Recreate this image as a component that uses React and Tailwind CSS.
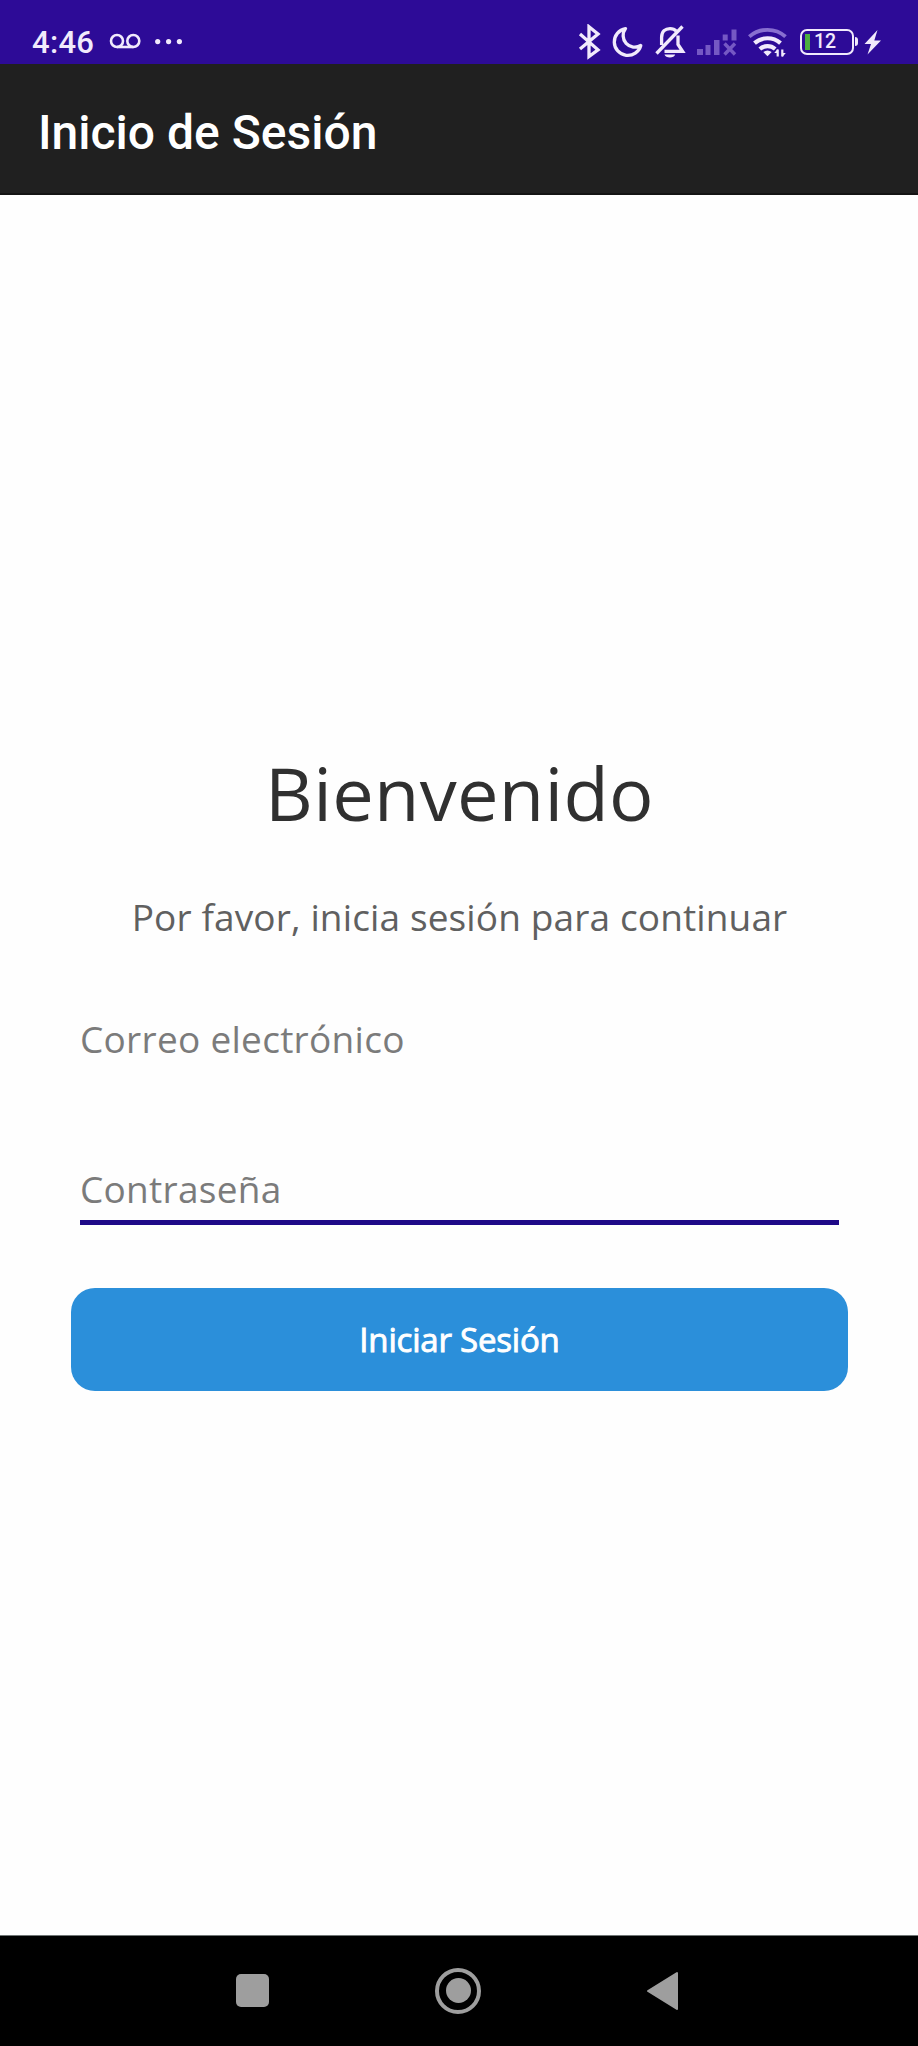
function StatusBar() {
  return (
    <header className="flex h-16 items-start bg-[#2d0b97] pt-6 pl-8 text-[#f1eafc]">
      <span className="mt-px h-9 w-[75px] font-[Roboto,sans-serif] text-[31px] leading-9 font-medium tracking-[0.3px] whitespace-nowrap">4:46</span>
      <svg className="h-9 w-9 shrink-0" viewBox="107 24 36 36" fill="none" stroke="currentColor" strokeWidth="2.6">
        <circle cx="117" cy="41" r="6" />
        <circle cx="133.3" cy="41" r="6" />
        <path d="M117 47h16.3" />
      </svg>
      <svg className="ml-2 h-9 w-9 shrink-0" viewBox="151 24 36 36" fill="currentColor">
        <circle cx="157.7" cy="41.6" r="2.6" />
        <circle cx="168.6" cy="41.6" r="2.6" />
        <circle cx="179.4" cy="41.6" r="2.6" />
      </svg>

      <div className="ml-auto flex h-9 w-[340px] shrink-0 items-start">
        <svg className="h-9 w-6 shrink-0" viewBox="578 24 24 36" fill="none" stroke="currentColor" strokeWidth="3.3">
          <path d="M580 34l18 15.8-9 6.7V26.8l9 7.2-18 15" />
        </svg>
        <svg className="ml-2 h-9 w-[34px] shrink-0" viewBox="610 24 34 36" fill="none" stroke="currentColor" strokeWidth="3.3" strokeLinejoin="round">
          <path d="M625.5 28.6A13.5 13.5 0 1 0 640.8 45.5A11.6 11.6 0 0 1 625.5 28.6Z" />
        </svg>
        <svg className="ml-2.5 h-9 w-[34px] shrink-0" viewBox="654 24 34 36" fill="none" stroke="currentColor" strokeWidth="3.3">
          <path d="M682.5 26.5L656.5 53.5" />
          <path d="M661.6 45V37.5C661.6 31.5 665.3 28.6 670 28.6C672.6 28.6 674.8 29.5 676.3 31.2" />
          <path d="M678 35.5V44.5L682.6 51.4H664.5" />
          <path d="M664.5 54.6h10.7c-.8 3.8-9.9 3.8-10.7 0z" fill="currentColor" stroke="none" />
        </svg>
        <svg className="ml-1.5 h-9 w-[46px] shrink-0 text-[#7558c4]" viewBox="694 24 46 36" fill="currentColor">
          <rect x="697" y="49" width="6" height="6" />
          <rect x="705.5" y="45" width="5" height="10" />
          <rect x="714" y="40" width="5.5" height="15" />
          <path d="M722.7 34.5h5v6h-5zM731.5 29.5h5v11h-5z" />
          <path d="M724.5 43.5l10.5 11M735 43.5l-10.5 11" stroke="currentColor" strokeWidth="3.4" />
        </svg>
        <svg className="ml-1.5 h-9 w-11 shrink-0" viewBox="746 24 44 36" fill="none" stroke="currentColor" strokeWidth="4.2">
          <path d="M749.3 36.7C759.5 27.5 775.5 27.5 785.5 36.7" stroke="#886fd0" strokeWidth="3.8" />
          <path d="M754.5 43.2C762 36.6 773 36.6 780.5 43.2" />
          <path d="M759.8 49C764.3 45.2 770.7 45.2 775.2 49" />
          <path d="M763.3 52q4.2-3 8.4 0l-4.2 4.3z" fill="currentColor" stroke="none" />
          <path d="M777.7 56.5v-7M782.3 49.5v7" strokeWidth="2.2" />
          <path d="M774.2 53l3.5-4v4zM785.8 53l-3.5 4v-4z" fill="currentColor" stroke="none" />
        </svg>
        <div className="mt-[5px] ml-2.5 flex h-[26px] w-[54px] shrink-0 items-center rounded-[7px] border-[2.4px] border-current pl-[3px]">
          <span className="h-4 w-[5px] shrink-0 bg-[#4caf3f]" />
          <span className="ml-1 font-[Roboto,sans-serif] text-[19.5px] leading-[22px] font-medium">12</span>
        </div>
        <span className="mt-[13px] ml-px h-[9px] w-[3px] shrink-0 rounded-r-sm bg-current" />
        <svg className="ml-[5px] h-9 w-5 shrink-0" viewBox="863 24 20 36" fill="currentColor">
          <path d="M877.5 30L864.5 44H871L867.5 54.5L881 40.5H874.3Z" />
        </svg>
      </div>
    </header>
  );
}

function NavigationBar() {
  return (
    <nav className="flex h-[111px] items-center border-t border-[#6f7575] bg-black pb-px pl-[236px] text-[#9e9e9e]">
      <span className="size-[33px] rounded-[5px] bg-current" />
      <span className="ml-[166px] flex size-[46px] items-center justify-center rounded-full border-4 border-current">
        <span className="size-[25px] rounded-full bg-current" />
      </span>
      <svg className="ml-[165px] h-10 w-[34px]" viewBox="0 0 34 40" fill="currentColor" stroke="currentColor" strokeWidth="2" strokeLinejoin="round">
        <path d="M2 20L31 2V38Z" />
      </svg>
    </nav>
  );
}

export default function App() {
  return (
    <div className="flex h-[2046px] w-[918px] flex-col overflow-hidden bg-[#fefefe] font-['Open_Sans',sans-serif]">
      <StatusBar />
      <div className="h-[131px] border-b-2 border-[#141414] bg-[#202020] pt-[39px] pl-[38px]">
        <h1 className="font-[Roboto,sans-serif] text-[48px] leading-[60px] font-medium whitespace-nowrap text-white">Inicio de Sesión</h1>
      </div>
      <main className="flex flex-1 flex-col pt-[548px] pr-[70px] pl-[71px]">
        <h2 className="text-center text-[74px] leading-[100px] tracking-[0.3px] whitespace-nowrap text-[#303030]">Bienvenido</h2>
        <p className="mt-[49px] text-center text-[37px] leading-[50px] tracking-[0.13px] whitespace-nowrap text-[#606060]">Por favor, inicia sesión para continuar</p>
        <div className="mx-[9px] mt-[72px] h-[76px] text-[37px] leading-[50px] tracking-[0.28px] whitespace-nowrap text-[#7b7b7b]">Correo electrónico</div>
        <div className="mx-[9px] mt-[74px] h-[61px] border-b-5 border-[#1f0a88] text-[37px] leading-[50px] tracking-[0.28px] whitespace-nowrap text-[#7b7b7b]">Contraseña</div>
        <button className="mt-[63px] flex h-[103px] items-center justify-center rounded-[24px] bg-[#2b8fda] text-[33px] leading-[44px] tracking-[-0.2px] text-white [-webkit-text-stroke:0.9px_white]">
          Iniciar Sesión
        </button>
      </main>
      <NavigationBar />
    </div>
  );
}
